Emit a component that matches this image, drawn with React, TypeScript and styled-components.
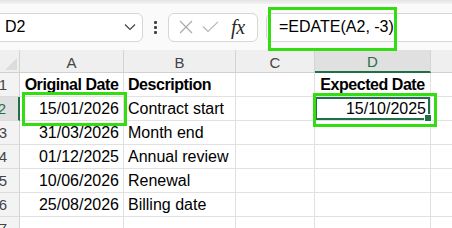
import React from 'react';
import styled, { createGlobalStyle } from 'styled-components';

const GREEN_MARK = '#33dd11';
const EXCEL_GREEN = '#1f7145';

const GlobalStyle = createGlobalStyle`
  html, body { margin: 0; padding: 0; background: #fff; overflow: hidden; }
  body { font-family: "Liberation Sans", Arial, sans-serif; color: #000; }
`;

const Page = styled.div`
  width: 452px;
  height: 228px;
  overflow: hidden;
  display: flex;
  flex-direction: column;
`;

const TopShade = styled.div`
  flex-shrink: 0;
  height: 4px;
  background: linear-gradient(#e4e4e4, #ececec 60%, #f4f4f4);
  box-shadow: 0 1px 2px rgba(0, 0, 0, 0.12);
`;

const ToolRow = styled.div`
  flex-shrink: 0;
  height: 46px;
  display: flex;
  align-items: center;
  background: #fafafa;
`;

const Box = styled.div`
  height: 29px;
  box-sizing: border-box;
  background: #fff;
  border: 1px solid #d6d6d6;
  border-radius: 6px;
  display: flex;
  align-items: center;
`;

const NameBox = styled(Box)`
  flex-shrink: 0;
  margin-left: -10px;
  width: 153px;
  padding: 0 6px 0 14px;
  justify-content: space-between;
  font-size: 16px;
`;

const Dots = styled.div`
  flex-shrink: 0;
  margin: 0 11px;
  display: flex;
  flex-direction: column;
  gap: 2px;
  span {
    width: 3px;
    height: 3px;
    background: #444;
    border-radius: 1px;
  }
`;

const ActionBox = styled(Box)`
  flex-shrink: 0;
  width: 90px;
  padding: 0 6px 0 10px;
  gap: 9px;
`;

const FxLabel = styled.span`
  font-family: "Liberation Serif", "Times New Roman", serif;
  font-style: italic;
  font-size: 20px;
  color: #2a2a2a;
  margin-left: 3px;
  letter-spacing: -0.3px;
`;

const FormulaBox = styled(Box)`
  position: relative;
  flex: 1;
  margin-left: 8px;
  margin-right: -10px;
  padding-left: 12px;
  font-size: 16px;
  border-radius: 6px 0 0 6px;
`;

const Mark = styled.div<{ $l: number; $t: number; $w: number; $h: number }>`
  position: absolute;
  left: ${(p) => p.$l}px;
  top: ${(p) => p.$t}px;
  width: ${(p) => p.$w}px;
  height: ${(p) => p.$h}px;
  box-sizing: border-box;
  border: 3px solid ${GREEN_MARK};
  pointer-events: none;
  z-index: 3;
`;

const Sheet = styled.div`
  flex: 1;
  min-height: 0;
  overflow: hidden;
  display: grid;
  grid-template-columns: 20px 104px 112px 79px 116px 90px;
  grid-template-rows: 23px repeat(7, 24px);
  background: #fff;
`;

const Corner = styled.div`
  position: relative;
  background: #efefef;
  border-right: 1px solid #d4d4d4;
  border-bottom: 1px solid #d0d0d0;
  &::after {
    content: '';
    position: absolute;
    right: 2px;
    bottom: 2px;
    border-style: solid;
    border-width: 0 0 12px 12px;
    border-color: transparent transparent #dcdcdc transparent;
  }
`;

const ColHead = styled.div<{ $active?: boolean }>`
  box-sizing: border-box;
  display: flex;
  align-items: center;
  justify-content: center;
  font-size: 15px;
  padding-top: 2px;
  color: ${(p) => (p.$active ? EXCEL_GREEN : '#444')};
  background: ${(p) => (p.$active ? '#e0e0e0' : '#efefef')};
  border-right: 1px solid #d4d4d4;
  border-bottom: ${(p) => (p.$active ? `2px solid ${EXCEL_GREEN}` : '1px solid #d0d0d0')};
`;

const RowHead = styled.div<{ $active?: boolean }>`
  box-sizing: border-box;
  display: flex;
  align-items: center;
  justify-content: flex-end;
  padding-right: 12px;
  font-size: 15px;
  color: ${(p) => (p.$active ? EXCEL_GREEN : '#444')};
  background: ${(p) => (p.$active ? '#e0e0e0' : '#f3f3f3')};
  border-bottom: 1px solid #dcdcdc;
  border-right: ${(p) => (p.$active ? `2px solid ${EXCEL_GREEN}` : '1px solid #d4d4d4')};
`;

const Cell = styled.div<{ $align?: 'left' | 'right' | 'center'; $bold?: boolean }>`
  position: relative;
  box-sizing: border-box;
  display: flex;
  align-items: flex-end;
  justify-content: ${(p) =>
    p.$align === 'right' ? 'flex-end' : p.$align === 'center' ? 'center' : 'flex-start'};
  padding: 0 4px 2px;
  font-size: 16px;
  line-height: 18px;
  font-weight: ${(p) => (p.$bold ? 700 : 400)};
  letter-spacing: ${(p) => (p.$bold ? '-0.45px' : '0')};
  white-space: nowrap;
  border-right: 1px solid #e1e1e1;
  border-bottom: 1px solid #e1e1e1;
`;

const ActiveFrame = styled.div`
  position: absolute;
  left: 0;
  top: 0;
  right: 0;
  bottom: 0;
  border: 2px solid ${EXCEL_GREEN};
  pointer-events: none;
  z-index: 2;
  &::after {
    content: '';
    position: absolute;
    right: -4px;
    bottom: -4px;
    width: 6px;
    height: 6px;
    background: ${EXCEL_GREEN};
    border: 1px solid #fff;
  }
`;

const rows = [
  ['15/01/2026', 'Contract start'],
  ['31/03/2026', 'Month end'],
  ['01/12/2025', 'Annual review'],
  ['10/06/2026', 'Renewal'],
  ['25/08/2026', 'Billing date'],
  ['', ''],
];

export default function App() {
  return (
    <Page>
      <GlobalStyle />
      <TopShade />
      <ToolRow>
        <NameBox>
          <span>D2</span>
          <svg width="12" height="8" viewBox="0 0 12 8">
            <path d="M1 1.5 L6 6.5 L11 1.5" fill="none" stroke="#444" strokeWidth="1.2" />
          </svg>
        </NameBox>
        <Dots>
          <span />
          <span />
          <span />
        </Dots>
        <ActionBox>
          <svg width="14" height="14" viewBox="0 0 14 14">
            <path d="M1 1 L13 13 M13 1 L1 13" stroke="#a8a8a8" strokeWidth="1.1" />
          </svg>
          <svg width="17" height="12" viewBox="0 0 17 12">
            <path d="M1 5.5 L6 10.5 L16 0.8" fill="none" stroke="#b4b4b4" strokeWidth="1.1" />
          </svg>
          <FxLabel>fx</FxLabel>
        </ActionBox>
        <FormulaBox>
          =EDATE(A2, -3)
          <Mark $l={1} $t={-7} $w={129} $h={44} />
        </FormulaBox>
      </ToolRow>
      <Sheet>
        <Corner />
        <ColHead>A</ColHead>
        <ColHead>B</ColHead>
        <ColHead>C</ColHead>
        <ColHead $active>D</ColHead>
        <ColHead>E</ColHead>

        <RowHead>1</RowHead>
        <Cell $bold $align="center">Original Date</Cell>
        <Cell $bold>Description</Cell>
        <Cell />
        <Cell $bold $align="center">Expected Date</Cell>
        <Cell />

        {rows.map(([date, desc], i) => (
          <React.Fragment key={i}>
            <RowHead $active={i === 0}>{i + 2}</RowHead>
            <Cell $align="right">
              {date}
              {i === 0 && <Mark $l={2} $t={-5} $w={105} $h={34} />}
            </Cell>
            <Cell>{desc}</Cell>
            <Cell />
            <Cell $align="right">
              {i === 0 && '15/10/2025'}
              {i === 0 && <ActiveFrame />}
              {i === 0 && <Mark $l={-2} $t={-4} $w={124} $h={34} />}
            </Cell>
            <Cell />
          </React.Fragment>
        ))}
      </Sheet>
    </Page>
  );
}
